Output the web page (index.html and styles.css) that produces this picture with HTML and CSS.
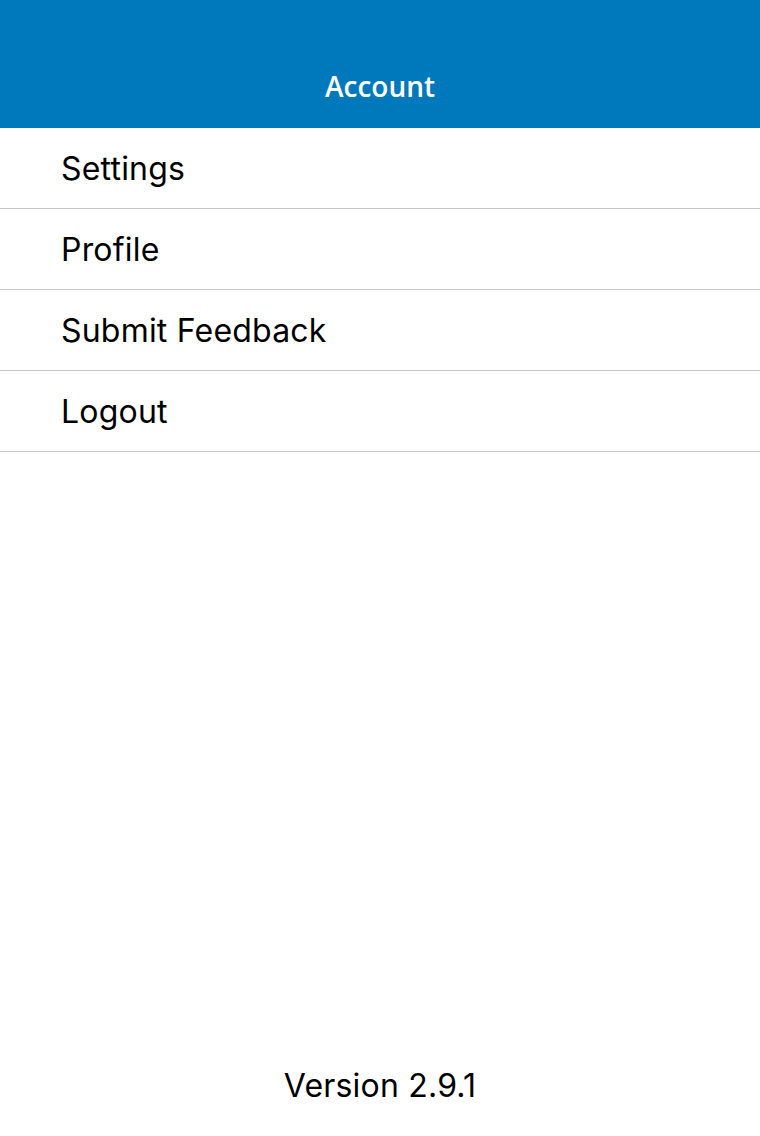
FILE: index.html
```html
<!DOCTYPE html>
<html>
<head>
<meta charset="utf-8">
<link rel="stylesheet" href="styles.css">
</head>
<body>
<div class="screen">
  <header class="navbar"><h1 class="title">Account</h1></header>
  <ul class="menu">
    <li class="item">Settings</li>
    <li class="item">Profile</li>
    <li class="item">Submit Feedback</li>
    <li class="item">Logout</li>
  </ul>
  <footer class="version">Version 2.9.1</footer>
</div>
</body>
</html>
```
FILE: styles.css
```css
html, body { margin: 0; padding: 0; background: #fff; }
.screen {
  width: 760px;
  height: 1136px;
  display: flex;
  flex-direction: column;
  font-family: Inter, "Liberation Sans", sans-serif;
}
.navbar {
  height: 128px;
  background: #0079bc;
  display: flex;
  align-items: flex-end;
  justify-content: center;
  box-sizing: border-box;
  padding-bottom: 24px;
}
.title {
  margin: 0;
  color: #fff;
  font-family: "Open Sans", sans-serif;
  font-weight: 600;
  font-size: 28px;
  line-height: 36px;
}
.menu { list-style: none; margin: 0; padding: 0; flex: 1; }
.item {
  height: 80px;
  border-bottom: 1px solid #c8c7cc;
  display: flex;
  align-items: center;
  padding-left: 61px;
  font-size: 32px;
  color: #000;
  letter-spacing: 0.2px;
}
.version {
  text-align: center;
  font-size: 32px;
  line-height: 40px;
  padding-bottom: 30px;
  color: #000;
  letter-spacing: 0.2px;
}
```
